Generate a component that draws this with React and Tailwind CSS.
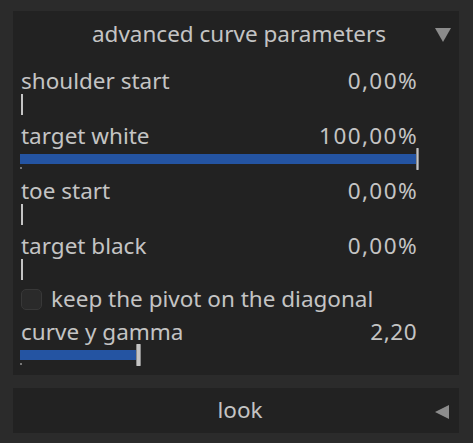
import React from "react";

function SliderRow({ label, value, pct, handleW = 3, wide = true }) {
  return (
    <div className="flex flex-col">
      <div className="flex h-[24px] items-center justify-between leading-none">
        <span className="pl-[1px]">{label}</span>
        <span className={wide ? "tracking-[1.4px] -mr-[1px]" : "tracking-[0.5px]"}>{value}</span>
      </div>
      <div className="relative h-[22px] w-[397px]">
        {pct > 0 && (
          <div
            className="absolute left-0 top-[6px] h-[10px] bg-[#2454a2]"
            style={{ width: `${pct}%` }}
          />
        )}
        {pct > 0 && (
          <div className="absolute left-0 top-[19px] h-[2px] w-[2px] bg-[#777777]" />
        )}
        {pct > 0 ? (
          <div
            className="absolute top-0 h-[22px] rounded-[1px] bg-[#c4c4c4] border-x border-[#8a8a8a]"
            style={{ left: `calc(${pct}% - 1px)`, width: `${handleW}px` }}
          />
        ) : (
          <div className="absolute left-[1px] top-[1px] h-[21px] w-[2px] bg-[#c4c4c4]" />
        )}
      </div>
    </div>
  );
}

export default function App() {
  return (
    <div
      className="w-[473px] h-[443px] bg-[#2b2b2b] pt-[11px] pl-[13px] pr-[14px] text-[#c4c4c4] text-[22.5px]"
      style={{ fontFamily: '"Noto Sans", "Open Sans", sans-serif' }}
    >
      <div className="h-[364px] bg-[#222222] flex flex-col">
        <div className="relative h-[46px] flex items-center justify-center">
          <span className="leading-none pl-[6px]">advanced curve parameters</span>
          <svg
            className="absolute left-[422px] top-[17px]"
            width="16"
            height="14"
            viewBox="0 0 16 14"
          >
            <polygon points="0,0 16,0 8,14" fill="#8c8c8c" />
          </svg>
        </div>
        <div className="flex flex-col pl-[7px] pt-[12px] w-[404px]">
          <div className="flex flex-col gap-[9px]">
            <SliderRow label="shoulder start" value="0,00%" pct={0} />
            <SliderRow label="target white" value="100,00%" pct={100} />
            <SliderRow label="toe start" value="0,00%" pct={0} />
            <SliderRow label="target black" value="0,00%" pct={0} />
          </div>
          <div className="mt-[8px] flex h-[22px] items-center gap-[9px] pl-[1px]">
            <div className="h-[21px] w-[21px] shrink-0 rounded-[5px] border border-[#383838] bg-[#2a2a2a]" />
            <span className="leading-none whitespace-nowrap">keep the pivot on the diagonal</span>
          </div>
          <div className="mt-[10px]">
            <SliderRow label="curve y gamma" value="2,20" pct={29.5} handleW={5} wide={false} />
          </div>
        </div>
      </div>
      <div className="mt-[13px] relative h-[45px] bg-[#222222] flex items-center justify-center">
        <span className="leading-none pl-[8px]">look</span>
        <svg
          className="absolute left-[422px] top-[17px]"
          width="14"
          height="14"
          viewBox="0 0 14 14"
        >
          <polygon points="14,0 14,14 0,7" fill="#8c8c8c" />
        </svg>
      </div>
    </div>
  );
}
